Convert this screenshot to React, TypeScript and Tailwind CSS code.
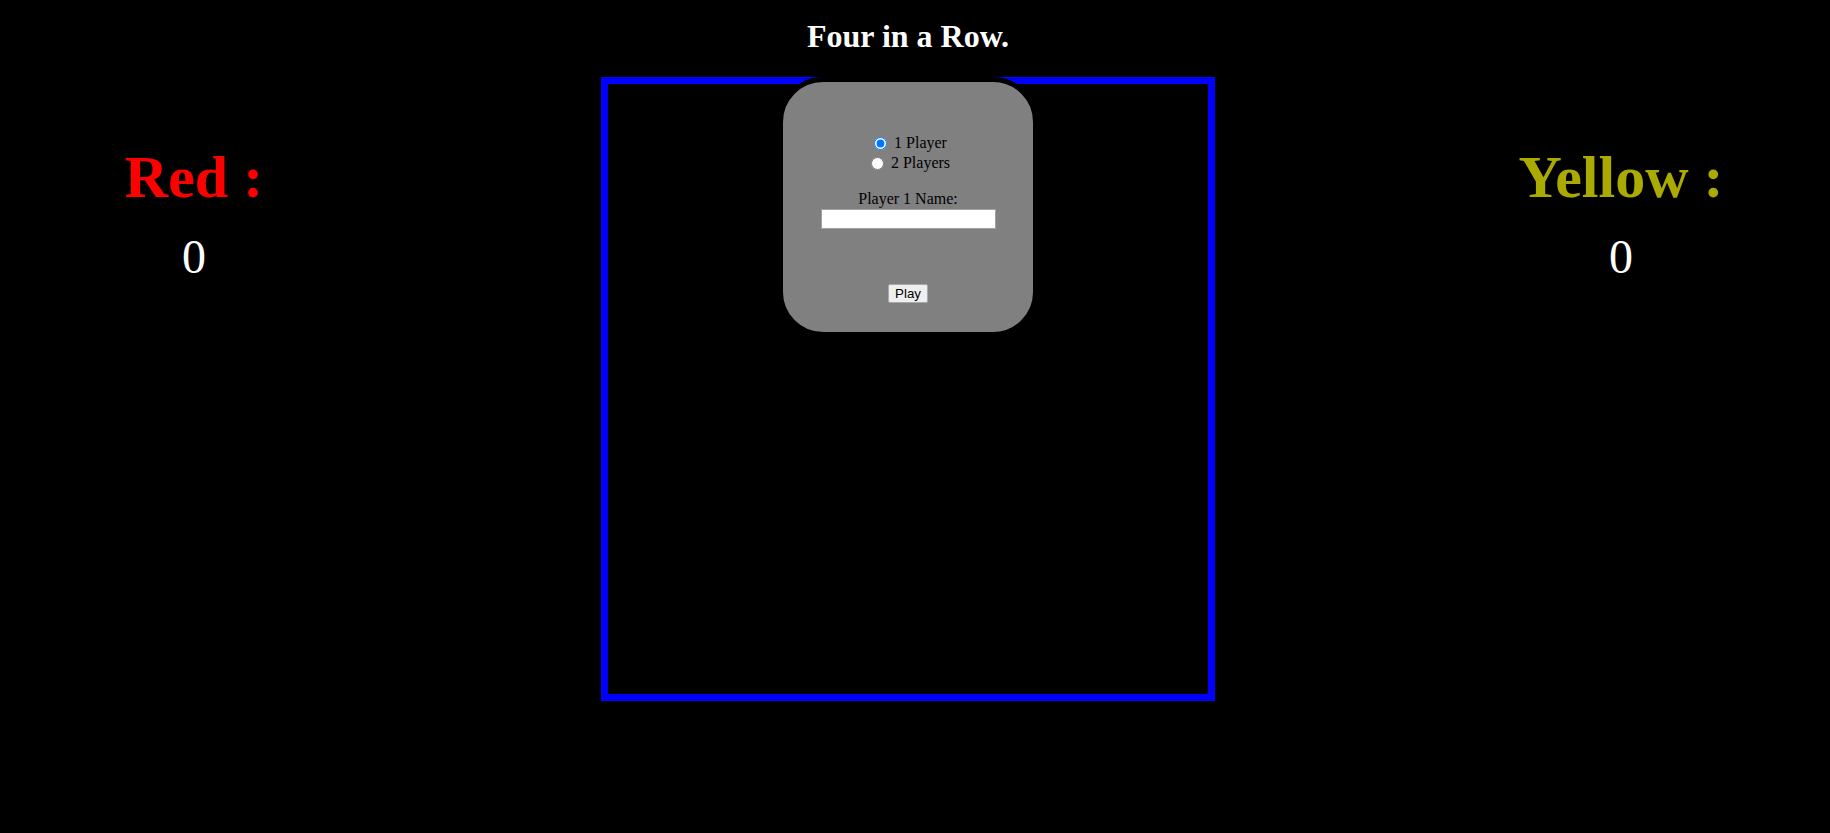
import React, { useState } from 'react';

const serif = "font-['Liberation_Serif','Times_New_Roman',serif]";

type ScoreProps = {
  label: string;
  color: string;
  score: number;
}

const Score = ({ label, color, score }: ScoreProps) => (
  <div className={`pt-[70px] text-center ${serif}`}>
    <div className={`text-[60px] leading-none font-bold ${color}`}>{label}</div>
    <div className="mt-[26px] text-[48px] leading-none text-white">{score}</div>
  </div>
);

type RadioRowProps = {
  label: string;
  checked: boolean;
  onPick: () => void;
}

const RadioRow = ({ label, checked, onPick }: RadioRowProps) => (
  <div className="flex h-[20px] items-center justify-center">
    <input
      type="radio"
      name="players"
      checked={checked}
      onChange={onPick}
      className="m-0 mr-[7px] ml-[5px] h-[13px] w-[13px]"
    />
    <span className="leading-[18px]">{label}</span>
  </div>
);

const App = () => {
  const [players, setPlayers] = useState<1 | 2>(1);
  const [name, setName] = useState('');

  return (
    <div className="h-[833px] w-full overflow-hidden bg-black">
      <h1 className={`w-[1816px] pt-[18px] text-center text-[32px] leading-[36px] font-bold text-white ${serif}`}>
        Four in a Row.
      </h1>

      <div className="mt-[23px] grid w-[1814px] grid-cols-[388px_1040px_386px]">
        <Score label="Red :" color="text-[#ff0000]" score={0} />

        <div className="flex justify-center">
          {/* board */}
          <div className="relative h-[624px] w-[614px] border-[7px] border-[#0000ff] bg-black">
            {/* start menu sits over the board */}
            <div className={`absolute top-[-7px] left-1/2 h-[260px] w-[260px] -translate-x-1/2 rounded-[45px] border-[5px] border-black bg-[#808080] pt-[51px] text-center text-[16px] text-black ${serif}`}>
              <RadioRow label="1 Player" checked={players === 1} onPick={() => setPlayers(1)} />
              <RadioRow label="2 Players" checked={players === 2} onPick={() => setPlayers(2)} />

              <div className="mt-[17px] leading-[18px]">Player 1 Name:</div>
              <input
                type="text"
                value={name}
                onChange={(e) => setName(e.target.value)}
                className="mx-auto mt-[1px] block h-[20px] w-[175px] border border-[#a0a0a0] bg-white px-[2px] text-[13px] font-['Liberation_Sans',Arial,sans-serif]"
              />

              <button className="mx-auto mt-[55px] flex h-[19px] w-[40px] items-center justify-center rounded-[2px] border border-[#a9a9a9] bg-[#efefef] text-[13.33px] text-black font-['Liberation_Sans',Arial,sans-serif]">
                Play
              </button>
            </div>
          </div>
        </div>

        <Score label="Yellow :" color="text-[#aaaa00]" score={0} />
      </div>
    </div>
  );
}

export default App;
